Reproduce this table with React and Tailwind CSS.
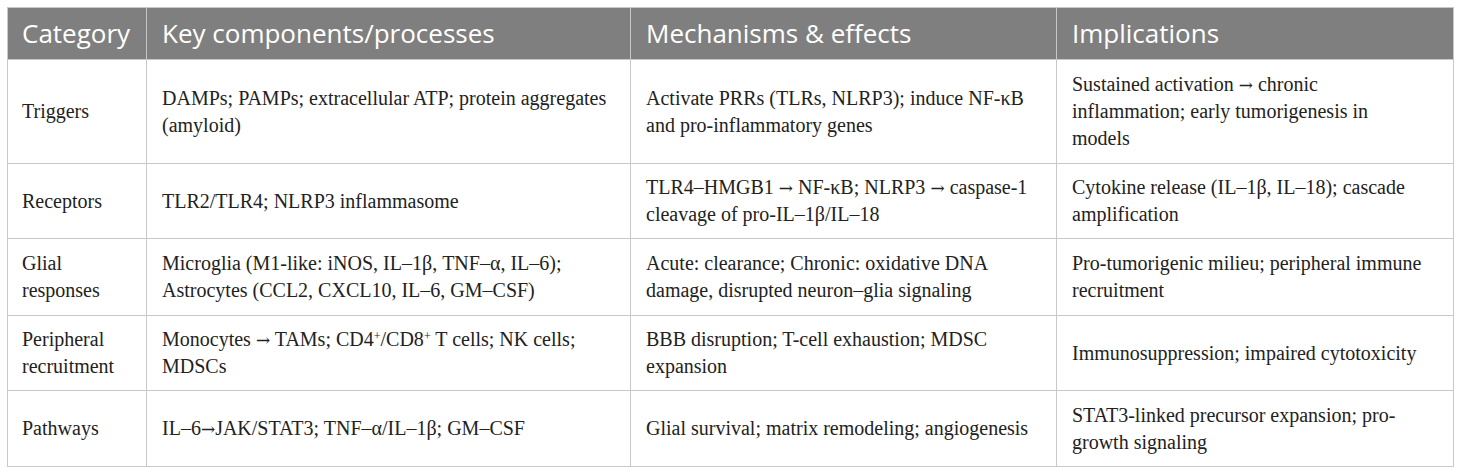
import React from 'react';

// arrows in the source are long, so give them a font that draws them that way
const Arrow = () => <span className="font-['DejaVu_Serif',serif] text-[17px] leading-none">→</span>;

const withArrows = (text) =>
  typeof text !== 'string'
    ? text
    : text.split('→').map((part, i) => (
        <React.Fragment key={i}>
          {i > 0 && <Arrow />}
          {part}
        </React.Fragment>
      ));

const rows = [
  {
    cat: 'Triggers',
    key: 'DAMPs; PAMPs; extracellular ATP; protein aggregates (amyloid)',
    mech: 'Activate PRRs (TLRs, NLRP3); induce NF-κB and pro-inflammatory genes',
    imp: (
      <>
        Sustained activation <Arrow /> chronic
        <br />
        inflammation; early tumorigenesis in
        <br />
        models
      </>
    ),
  },
  {
    cat: 'Receptors',
    key: 'TLR2/TLR4; NLRP3 inflammasome',
    mech: 'TLR4–HMGB1 → NF-κB; NLRP3 → caspase-1 cleavage of pro-IL–1β/IL–18',
    imp: 'Cytokine release (IL–1β, IL–18); cascade amplification',
  },
  {
    cat: 'Glial responses',
    key: 'Microglia (M1-like: iNOS, IL–1β, TNF–α, IL–6); Astrocytes (CCL2, CXCL10, IL–6, GM–CSF)',
    mech: 'Acute: clearance; Chronic: oxidative DNA damage, disrupted neuron–glia signaling',
    imp: 'Pro-tumorigenic milieu; peripheral immune recruitment',
  },
  {
    cat: 'Peripheral recruitment',
    key: (
      <>
        Monocytes <Arrow /> TAMs; CD4<sup className="text-[12px] leading-none">+</sup>/CD8<sup className="text-[12px] leading-none">+</sup> T cells; NK cells; MDSCs
      </>
    ),
    mech: 'BBB disruption; T-cell exhaustion; MDSC expansion',
    imp: 'Immunosuppression; impaired cytotoxicity',
  },
  {
    cat: 'Pathways',
    key: 'IL–6→JAK/STAT3; TNF–α/IL–1β; GM–CSF',
    mech: 'Glial survival; matrix remodeling; angiogenesis',
    imp: 'STAT3-linked precursor expansion; pro-growth signaling',
  },
];

const heights = ['h-[104px]', 'h-[75px]', 'h-[77px]', 'h-[75px]', 'h-[76px]'];

export default function App() {
  return (
    <div className="w-[1460px] h-[474px] bg-white pt-[7px] pl-[7px]">
      <table className="table-fixed border-collapse w-[1446px] text-[#222]">
        <colgroup>
          <col className="w-[139px]" />
          <col className="w-[484px]" />
          <col className="w-[426px]" />
          <col className="w-[397px]" />
        </colgroup>
        <thead>
          <tr className="h-[52px] bg-[#7f7f7f] text-white text-[26px] font-['Open_Sans',sans-serif]">
            <th className="border border-[#c8c8c8] text-left font-normal px-[14px]">Category</th>
            <th className="border border-[#c8c8c8] text-left font-normal px-[15px]">Key components/processes</th>
            <th className="border border-[#c8c8c8] text-left font-normal px-[15px]">Mechanisms &amp; effects</th>
            <th className="border border-[#c8c8c8] text-left font-normal px-[15px]">Implications</th>
          </tr>
        </thead>
        <tbody className="font-['Liberation_Serif','DejaVu_Serif',serif] text-[20px] leading-[27px]">
          {rows.map((r, i) => (
            <tr key={r.cat} className={heights[i]}>
              <td className="border border-[#c8c8c8] align-middle px-[14px] py-[10px]">{r.cat}</td>
              <td className="border border-[#c8c8c8] align-middle px-[15px] py-[10px]">{withArrows(r.key)}</td>
              <td className="border border-[#c8c8c8] align-middle px-[15px] py-[10px]">{withArrows(r.mech)}</td>
              <td className="border border-[#c8c8c8] align-middle px-[15px] py-[10px]">{withArrows(r.imp)}</td>
            </tr>
          ))}
        </tbody>
      </table>
    </div>
  );
}
